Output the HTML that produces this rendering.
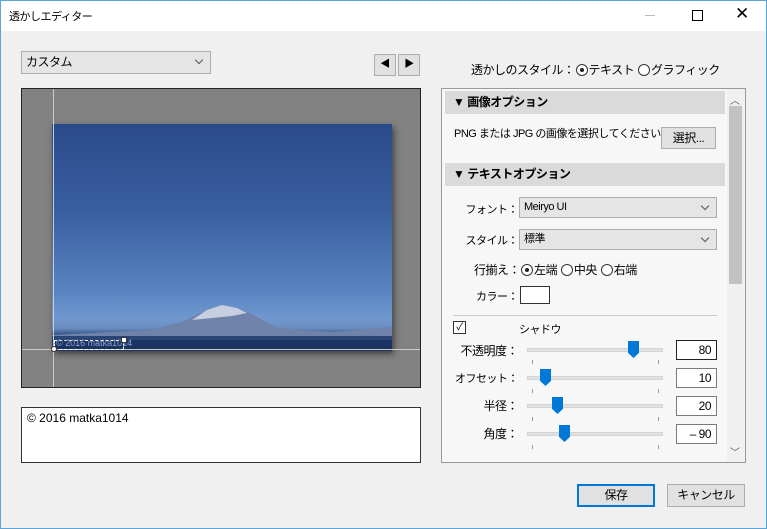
<!DOCTYPE html>
<html><head><meta charset="utf-8"><style>
*{box-sizing:border-box;margin:0;padding:0}
body{width:767px;height:529px;overflow:hidden;background:#f0f0f0;font-family:"Liberation Sans","Noto Sans CJK JP",sans-serif;font-size:11px;letter-spacing:-0.5px;color:#000;position:relative}
.a{position:absolute;white-space:nowrap}
.win{left:0;top:0;width:767px;height:529px;border:1px solid #5aa6dc}
.title{left:1px;top:1px;width:765px;height:30px;background:#fff}
.sel{background:#e5e5e5;border:1px solid #adadad}
.chev{position:absolute;right:8px;top:5px;width:6px;height:6px;border-right:1px solid #555;border-bottom:1px solid #555;transform:rotate(45deg)}
.hdr{background:#dadada;font-weight:bold;height:23px;line-height:23px;padding-left:8px;font-size:12px}
.box{background:#fff;border:1px solid #7a7a7a;text-align:right;padding-right:5px;line-height:18px;font-size:12px}
.track{height:4px;background:#e0e0e0;border:1px solid #d4d4d4}
.thumb{width:11px;height:17px;background:#0078d7;clip-path:polygon(0 0,100% 0,100% 70%,50% 100%,0 70%)}
.tick{width:1px;height:4px;background:#999}
.rb{display:inline-block;width:12px;height:12px;border:1px solid #333;border-radius:50%;vertical-align:-2px;position:relative;background:#fff;margin:0 1px}
.rb.on::after{content:"";position:absolute;left:3px;top:3px;width:4px;height:4px;border-radius:50%;background:#222}
.btn{background:#e1e1e1;border:1px solid #adadad;text-align:center;line-height:20px;font-size:12px}
.lbl{right:249px}
</style></head><body>
<div class="a win"></div>
<div class="a title"></div>
<div class="a" style="left:9px;top:8px">透かしエディター</div>
<div class="a" style="left:645px;top:15px;width:10px;height:1px;background:#bbb"></div>
<div class="a" style="left:692px;top:10px;width:11px;height:11px;border:1px solid #000"></div>
<div class="a" style="left:735px;top:4px;font-size:17px;font-weight:300">✕</div>

<div class="a sel" style="left:21px;top:51px;width:190px;height:23px;padding-left:4px;line-height:21px;font-size:12px">カスタム<span class="chev"></span></div>
<div class="a btn" style="left:374px;top:54px;width:22px;height:22px;font-size:10px;line-height:20px">◀</div>
<div class="a btn" style="left:398px;top:54px;width:22px;height:22px;font-size:10px;line-height:20px">▶</div>
<div class="a" style="left:471px;top:61px;font-size:12px;letter-spacing:-0.5px">透かしのスタイル：<span class="rb on"></span>テキスト <span class="rb"></span>グラフィック</div>

<div class="a" style="left:21px;top:88px;width:400px;height:300px;background:#828282;border:1px solid #222"></div>
<div class="a" style="left:52px;top:124px;width:340px;height:227px;background:linear-gradient(#2a4a8a 0%,#3a60a2 40%,#5b86c2 75%,#7199cf 86%,#6a8cbf 90%,#2f4e82 93%,#1c3566 95%,#1a325f 100%);box-shadow:2px 3px 6px rgba(0,0,0,.5)"></div>
<svg class="a" style="left:52px;top:300px" width="340" height="40"><polygon points="0,35 100,30 130,22 155,10 170,5 185,8 200,14 225,28 280,32 330,28 340,27 340,36 0,37" fill="#6f82aa"/><polygon points="140,20 155,10 170,5 185,8 195,13 180,16 160,18" fill="#c6cfe0"/><rect x="0" y="36" width="340" height="4" fill="#2a4576"/></svg>
<div class="a" style="left:53px;top:89px;width:1px;height:298px;background:#ccc"></div>
<div class="a" style="left:22px;top:349px;width:398px;height:1px;background:#ccc"></div>
<div class="a" style="left:54px;top:340px;width:70px;height:10px;border:1px dashed #fff"></div>
<div class="a" style="left:56px;top:338px;font-size:9px;letter-spacing:0;color:#8ea2c8">© 2016 matka1014</div>
<div class="a" style="left:121px;top:337px;width:6px;height:6px;background:#fff;border:1px solid #333"></div>
<div class="a" style="left:51px;top:346px;width:6px;height:6px;background:#fff;border-radius:50%;border:1px solid #333"></div>

<div class="a" style="left:21px;top:407px;width:400px;height:56px;background:#fff;border:1px solid #333;padding:3px 5px;font-size:12px;letter-spacing:0">© 2016 matka1014</div>

<div class="a" style="left:441px;top:88px;width:305px;height:375px;background:#f7f7f7;border:1px solid #999"></div>
<div class="a" style="left:727px;top:89px;width:18px;height:373px;background:#f0f0f0"></div>
<div class="a" style="left:729px;top:106px;width:13px;height:178px;background:#c2c2c2"></div>
<div class="a" style="left:730px;top:92px;font-size:10px;color:#555">︿</div>
<div class="a" style="left:730px;top:444px;font-size:10px;color:#555">﹀</div>

<div class="a hdr" style="left:445px;top:91px;width:280px">▼ 画像オプション</div>
<div class="a" style="left:454px;top:125px">PNG または JPG の画像を選択してください</div>
<div class="a btn" style="left:661px;top:127px;width:55px;height:22px">選択...</div>
<div class="a hdr" style="left:445px;top:163px;width:280px">▼ テキストオプション</div>
<div class="a lbl" style="top:201px">フォント：</div>
<div class="a sel" style="left:519px;top:197px;width:198px;height:21px;padding-left:4px;line-height:19px">Meiryo UI<span class="chev"></span></div>
<div class="a lbl" style="top:232px">スタイル：</div>
<div class="a sel" style="left:519px;top:229px;width:198px;height:21px;padding-left:4px;line-height:19px">標準<span class="chev"></span></div>
<div class="a" style="left:474px;top:261px;font-size:12px;letter-spacing:-0.5px">行揃え：<span class="rb on"></span>左端 <span class="rb"></span>中央 <span class="rb"></span>右端</div>
<div class="a lbl" style="top:288px">カラー：</div>
<div class="a" style="left:520px;top:286px;width:30px;height:18px;background:#fff;border:1px solid #333"></div>
<div class="a" style="left:453px;top:315px;width:264px;height:1px;background:#ccc"></div>
<div class="a" style="left:453px;top:321px;width:13px;height:13px;border:1px solid #333;background:#fff;font-size:10px;line-height:11px;text-align:center">✓</div>
<div class="a" style="left:519px;top:321px">シャドウ</div>

<div class="a lbl" style="top:342px;font-size:12px">不透明度：</div>
<div class="a track" style="left:527px;top:348px;width:136px"></div>
<div class="a thumb" style="left:628px;top:341px"></div>
<div class="a tick" style="left:532px;top:360px"></div><div class="a tick" style="left:658px;top:360px"></div>
<div class="a box" style="left:676px;top:340px;width:41px;height:20px;border-color:#222">80</div>

<div class="a lbl" style="top:370px">オフセット：</div>
<div class="a track" style="left:527px;top:376px;width:136px"></div>
<div class="a thumb" style="left:540px;top:369px"></div>
<div class="a tick" style="left:532px;top:389px"></div><div class="a tick" style="left:658px;top:389px"></div>
<div class="a box" style="left:676px;top:368px;width:41px;height:20px">10</div>

<div class="a lbl" style="top:397px;font-size:12px">半径：</div>
<div class="a track" style="left:527px;top:404px;width:136px"></div>
<div class="a thumb" style="left:552px;top:397px"></div>
<div class="a tick" style="left:532px;top:417px"></div><div class="a tick" style="left:658px;top:417px"></div>
<div class="a box" style="left:676px;top:396px;width:41px;height:20px">20</div>

<div class="a lbl" style="top:425px;font-size:12px">角度：</div>
<div class="a track" style="left:527px;top:432px;width:136px"></div>
<div class="a thumb" style="left:559px;top:425px"></div>
<div class="a tick" style="left:532px;top:445px"></div><div class="a tick" style="left:658px;top:445px"></div>
<div class="a box" style="left:676px;top:424px;width:41px;height:20px">– 90</div>

<div class="a btn" style="left:577px;top:484px;width:78px;height:23px;border:2px solid #0078d7;line-height:19px">保存</div>
<div class="a btn" style="left:667px;top:484px;width:78px;height:23px">キャンセル</div>
</body></html>
